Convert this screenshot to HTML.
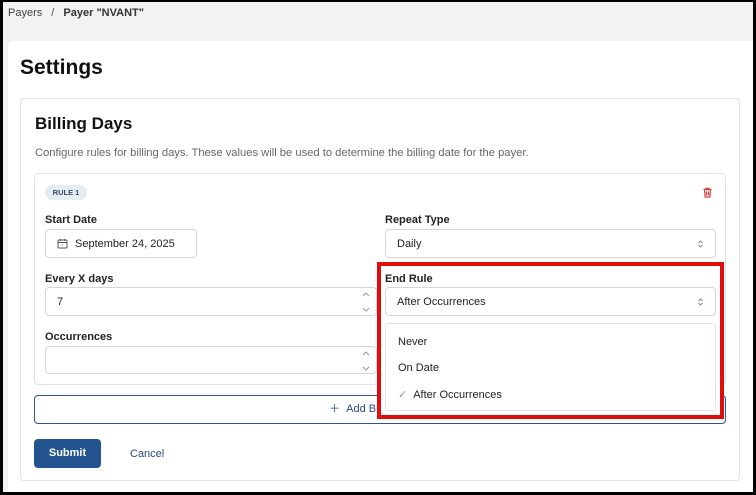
<!DOCTYPE html>
<html><head><style>
*{box-sizing:border-box;margin:0;padding:0}
body{width:756px;height:495px;position:relative;overflow:hidden;font-family:"Liberation Sans",sans-serif;background:#f2f2f2;color:#111}
.abs{position:absolute}
.frame{left:0;top:0;width:756px;height:495px;border-style:solid;border-color:#000;border-width:2px 3px 3px 3px;z-index:10}
.lbl{font-size:11px;font-weight:bold;color:#222}
.inp{border:1px solid #d4d6da;border-radius:4px;background:#fff;font-size:11px;color:#222;display:flex;align-items:center;padding-left:11px}
.sp{position:absolute;right:6px}
</style></head><body>
<div class="abs frame"></div>
<div class="abs" style="left:8px;top:7px;font-size:11px;color:#444">Payers <span style="margin:0 6px">/</span> <b style="color:#333">Payer "NVANT"</b></div>
<div class="abs" style="left:8px;top:41px;width:746px;height:451px;background:#fff;border-radius:5px 0 0 0"></div>
<div class="abs" style="left:20px;top:56px;font-size:21px;font-weight:bold">Settings</div>
<div class="abs" style="left:20px;top:98px;width:720px;height:383px;border:1px solid #e3e3e6;border-radius:4px"></div>
<div class="abs" style="left:35px;top:114px;font-size:17px;font-weight:bold">Billing Days</div>
<div class="abs" style="left:35px;top:147px;font-size:11.2px;color:#666">Configure rules for billing days. These values will be used to determine the billing date for the payer.</div>
<div class="abs" style="left:34px;top:173px;width:692px;height:212px;border:1px solid #e3e3e6;border-radius:4px"></div>
<div class="abs" style="left:45px;top:185px;width:42px;height:15px;border-radius:8px;background:#e6ecf3;font-size:7.5px;font-weight:bold;color:#3a4a66;text-align:center;line-height:15px">RULE 1</div>
<svg class="abs" style="left:702px;top:187px" width="11" height="11" viewBox="0 0 11 11"><path d="M1.5 2.5h8M4 2.5V1.3h3v1.2M2.5 2.5l.6 7.5h4.8l.6-7.5M4.5 4.5v4M6.5 4.5v4" stroke="#e03a3a" stroke-width="1.2" fill="none"/></svg>
<div class="abs lbl" style="left:45px;top:214px">Start Date</div>
<div class="abs inp" style="left:45px;top:229px;width:152px;height:29px"><svg width="11" height="11" viewBox="0 0 11 11" style="margin-right:7px"><rect x="1" y="2" width="9" height="8" rx="1" stroke="#555" fill="none"/><path d="M1 4.5h9M3.5 1v2M7.5 1v2M5 7h1" stroke="#555"/></svg>September 24, 2025</div>
<div class="abs lbl" style="left:385px;top:214px">Repeat Type</div>
<div class="abs inp" style="left:385px;top:229px;width:331px;height:29px">Daily<svg class="sp" style="right:11px;top:9px" width="7" height="10" viewBox="0 0 7 10"><path d="M1.5 4L3.5 2 5.5 4M1.5 6L3.5 8 5.5 6" stroke="#888" fill="none"/></svg></div>
<div class="abs lbl" style="left:45px;top:273px">Every X days</div>
<div class="abs inp" style="left:45px;top:287px;width:332px;height:29px">7<svg class="sp" style="top:3px" width="8" height="22" viewBox="0 0 8 22"><path d="M1 5L4 2 7 5M1 17L4 20 7 17" stroke="#999" fill="none"/></svg></div>
<div class="abs lbl" style="left:45px;top:331px">Occurrences</div>
<div class="abs inp" style="left:45px;top:346px;width:332px;height:28px"><svg class="sp" style="top:3px" width="8" height="22" viewBox="0 0 8 22"><path d="M1 5L4 2 7 5M1 17L4 20 7 17" stroke="#999" fill="none"/></svg></div>
<div class="abs" style="left:34px;top:395px;width:692px;height:29px;border:1px solid #2a5597;border-radius:4px;background:#fff;font-size:11px;color:#2a4a8a;padding-left:294px;line-height:27px">＋ &nbsp;Add Billing Rule</div>
<div class="abs" style="left:34px;top:439px;width:67px;height:29px;background:#24548f;border-radius:4px;color:#fff;font-size:11px;font-weight:bold;text-align:center;line-height:29px">Submit</div>
<div class="abs" style="left:130px;top:448px;font-size:11px;color:#2a4a8a">Cancel</div>
<div class="abs" style="left:377px;top:262px;width:347px;height:157px;border:4px solid #e00d0d;background:#fff"></div>
<div class="abs lbl" style="left:385px;top:273px">End Rule</div>
<div class="abs inp" style="left:385px;top:287px;width:331px;height:29px">After Occurrences<svg class="sp" style="right:11px;top:9px" width="7" height="10" viewBox="0 0 7 10"><path d="M1.5 4L3.5 2 5.5 4M1.5 6L3.5 8 5.5 6" stroke="#888" fill="none"/></svg></div>
<div class="abs" style="left:385px;top:323px;width:331px;height:88px;border:1px solid #e3e3e6;border-radius:3px;background:#fff;font-size:11px;color:#222">
<div class="abs" style="left:12px;top:12px">Never</div>
<div class="abs" style="left:12px;top:38px">On Date</div>
<div class="abs" style="left:12px;top:64px"><span style="color:#999;margin-right:6px">✓</span>After Occurrences</div>
</div>
</body></html>
